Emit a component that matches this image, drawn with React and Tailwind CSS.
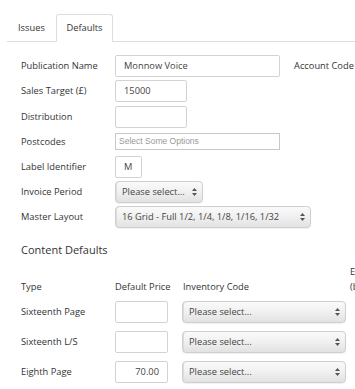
import React from 'react';

const Arrows = () => (
  <svg width="5" height="8" viewBox="0 0 5 8" className="shrink-0">
    <path d="M2.5 0 L5 3 L0 3 Z" fill="#555" />
    <path d="M2.5 8 L5 5 L0 5 Z" fill="#555" />
  </svg>
);

const Select = ({ value, width }) => (
  <div
    className={`flex items-center justify-between h-[22px] rounded-[4px] border border-[#cfcfcf] bg-linear-to-b from-[#fafafa] via-[#f0f0f0] to-[#e2e2e2] shadow-[inset_1px_0_0_#dcdcdc,0_1px_1px_rgba(0,0,0,0.06)] pl-[6px] pr-[5px] text-[#444] ${width}`}
  >
    <span className="whitespace-nowrap">{value}</span>
    <Arrows />
  </div>
);

const Input = ({ value = '', width, right = false }) => (
  <div
    className={`flex items-center h-[22px] rounded-[2px] border border-[#d3d3d3] bg-white px-[8px] text-[#444] ${width} ${right ? 'justify-end' : ''}`}
  >
    {value}
  </div>
);

const Row = ({ label, children, h = 'h-[25px]' }) => (
  <div className={`flex items-center ${h}`}>
    <div className="w-[94px] shrink-0">{label}</div>
    {children}
  </div>
);

const items = [
  { name: 'Sixteenth Page', price: '' },
  { name: 'Sixteenth L/S', price: '' },
  { name: 'Eighth Page', price: '70.00' },
];

export default function App() {
  return (
    <div className="w-[355px] h-[389px] overflow-hidden bg-white text-[#333] font-['Open_Sans',sans-serif] text-[9.3px]">
      {/* tabs */}
      <div className="pt-[14px] pl-[7px] w-[500px]">
        <div className="flex h-[28px] border-b border-[#dddddd]">
          <div className="flex items-center pl-[11px] w-[49px]">Issues</div>
          <div className="flex items-center justify-center w-[57px] h-[28px] bg-white border border-[#dddddd] border-b-white rounded-t-[3px]">
            Defaults
          </div>
        </div>
      </div>

      {/* main fields */}
      <div className="pl-[21px] pt-[11px] w-[600px]">
        <Row label="Publication Name">
          <Input value="Monnow Voice" width="w-[165px]" />
          <div className="ml-[14px] whitespace-nowrap">Account Code</div>
        </Row>
        <Row label="Sales Target (£)" h="h-[26px]">
          <Input value="15000" width="w-[72px]" />
        </Row>
        <Row label="Distribution">
          <Input width="w-[72px]" />
        </Row>
        <Row label="Postcodes">
          <div className="flex items-center h-[17px] w-[165px] border border-[#c8c8c8] bg-white pl-[3px] text-[8.5px] text-[#999] font-['Liberation_Sans',sans-serif]">
            Select Some Options
          </div>
        </Row>
        <Row label="Label Identifier">
          <Input value="M" width="w-[27px]" />
        </Row>
        <Row label="Invoice Period">
          <Select value="Please select..." width="w-[88px]" />
        </Row>
        <Row label="Master Layout">
          <Select value="16 Grid - Full 1/2, 1/4, 1/8, 1/16, 1/32" width="w-[196px]" />
        </Row>

        {/* content defaults */}
        <div className="mt-[14px] h-[14px] flex items-center text-[11px]">Content Defaults</div>

        <div className="mt-[7px] flex items-end h-[33px] pb-[3px] leading-[15px]">
          <div className="w-[94px] shrink-0">Type</div>
          <div className="w-[67px] shrink-0">Default Price</div>
          <div className="w-[168px] shrink-0 pl-px">Inventory Code</div>
          <div className="whitespace-nowrap">
            <div>Enabled</div>
            <div>(by default)</div>
          </div>
        </div>

        {items.map((it) => (
          <div key={it.name} className="flex items-center h-[30px]">
            <div className="w-[94px] shrink-0">{it.name}</div>
            <div className="w-[67px] shrink-0">
              <Input value={it.price} width="w-[53px]" right />
            </div>
            <Select value="Please select..." width="w-[164px]" />
          </div>
        ))}
      </div>
    </div>
  );
}
